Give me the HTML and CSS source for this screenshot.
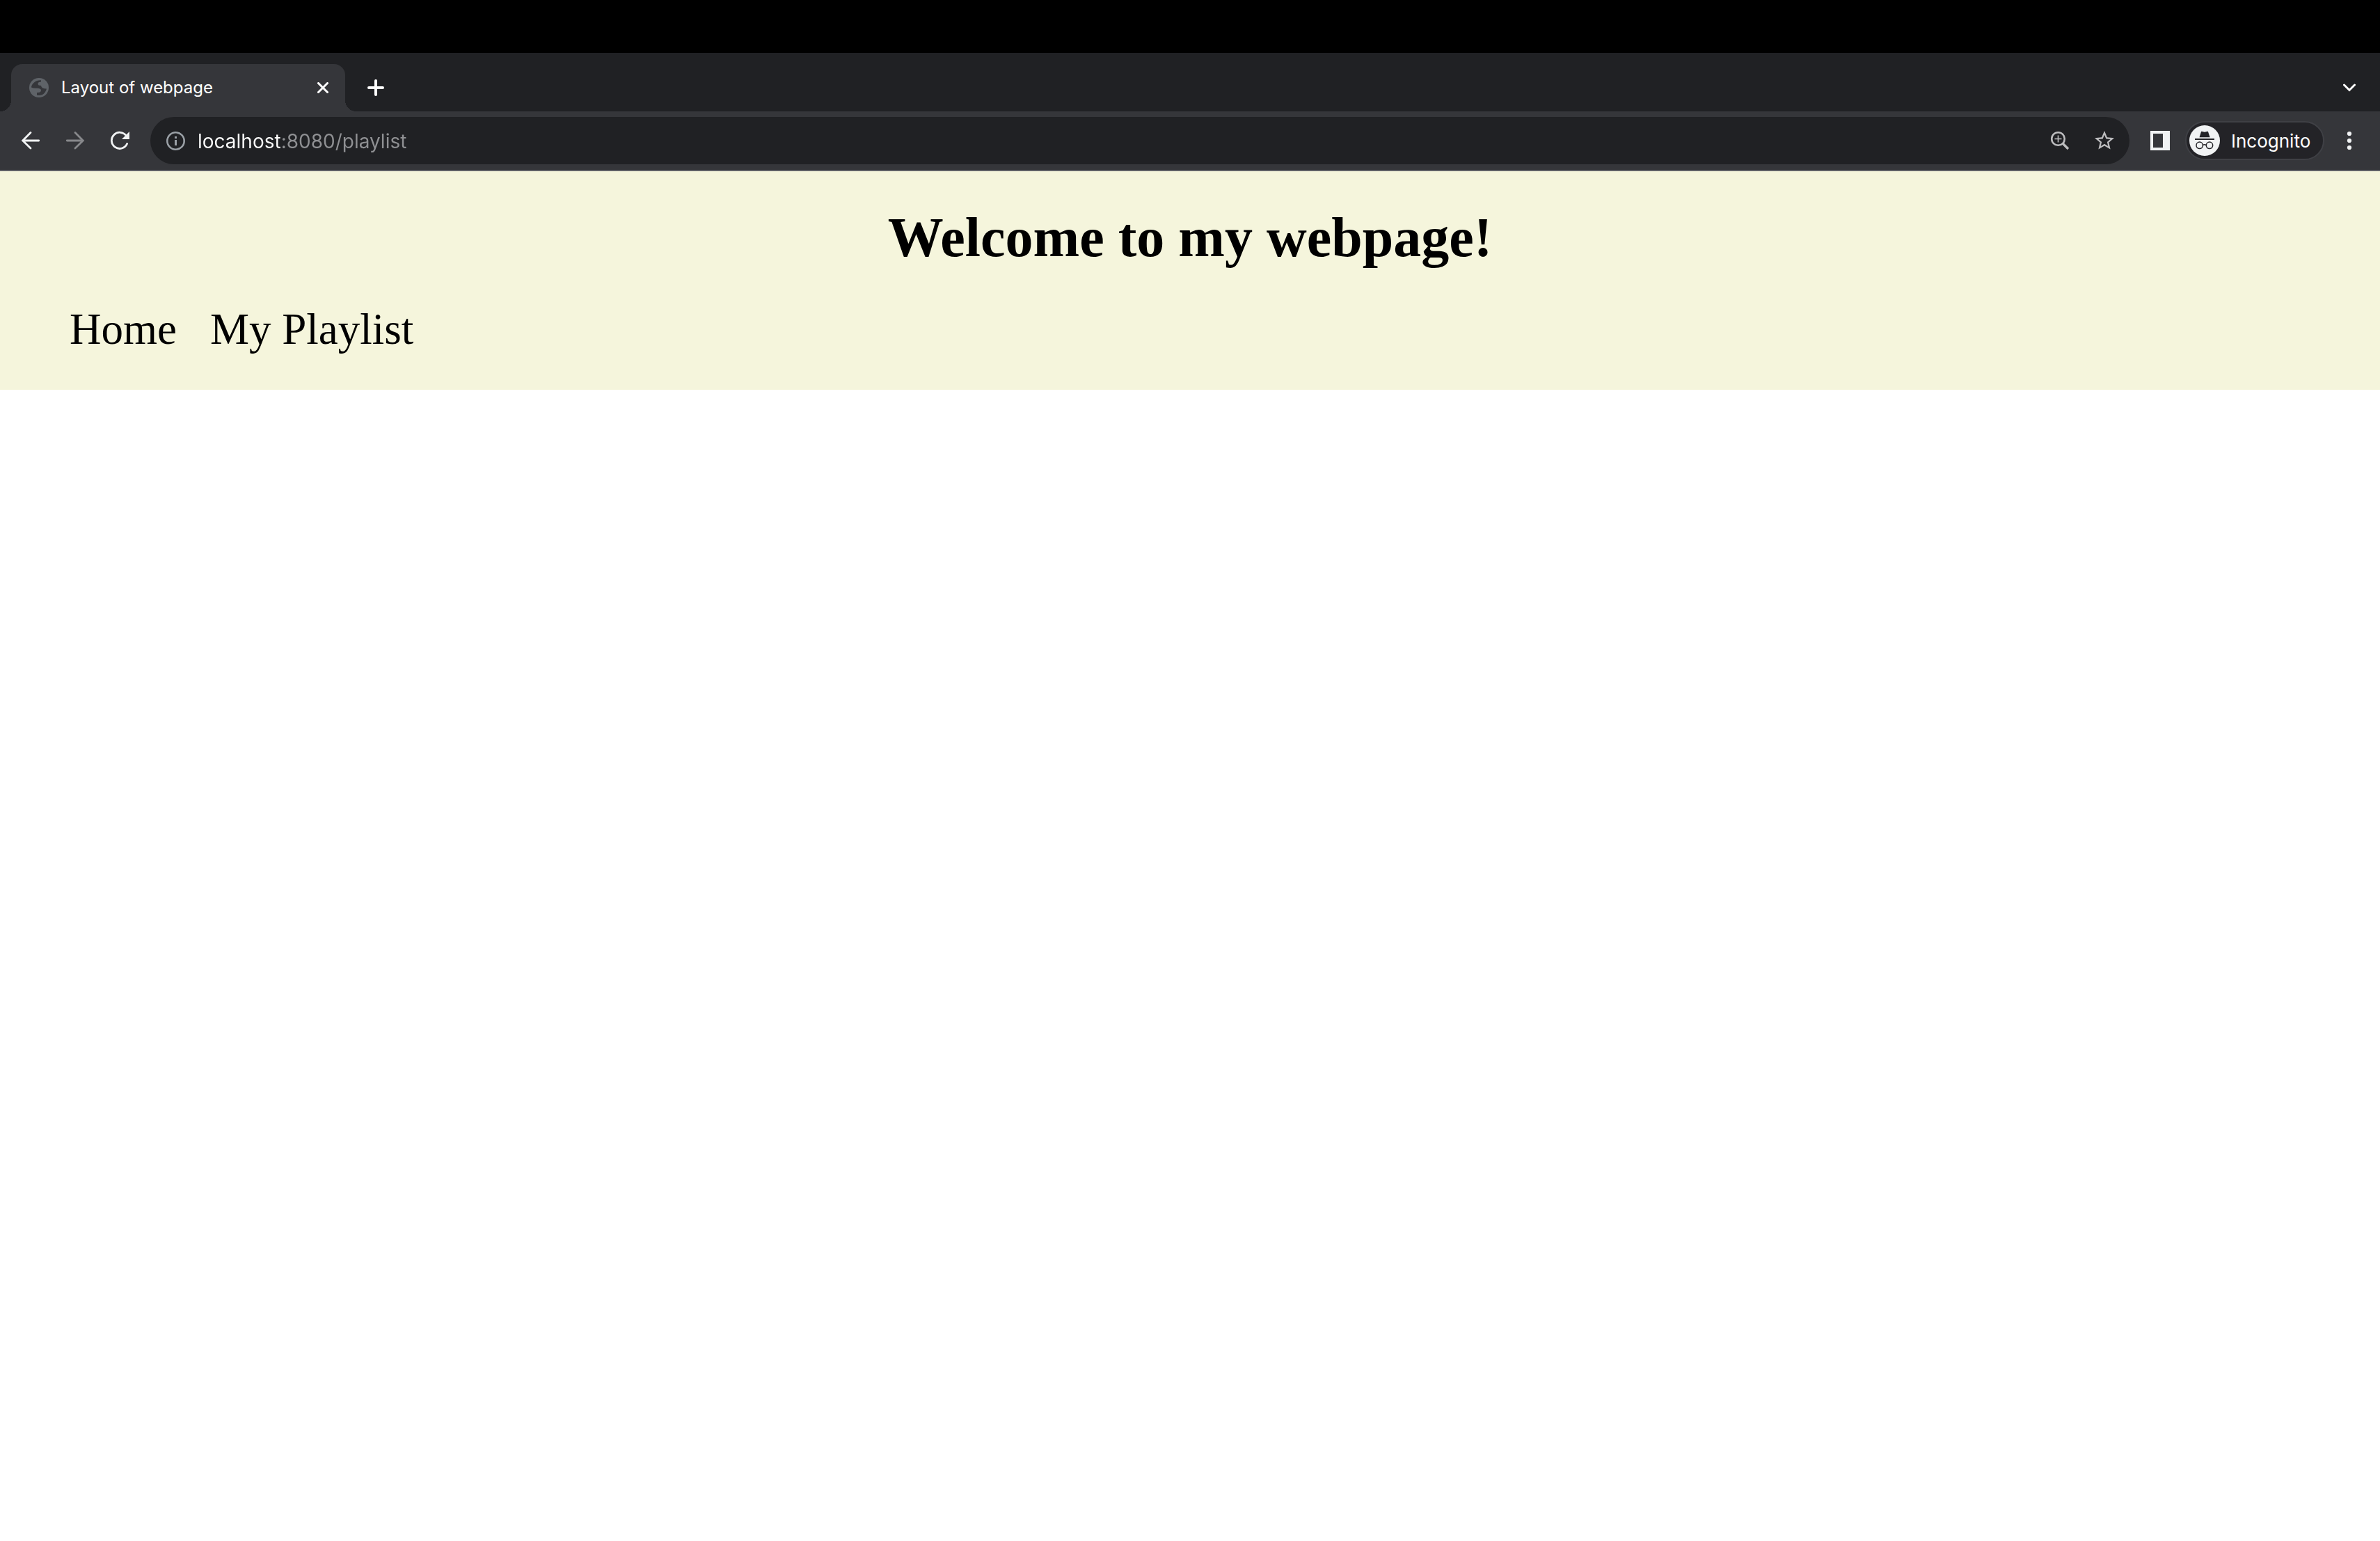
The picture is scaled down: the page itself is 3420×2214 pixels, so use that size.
FILE: index.html
```html
<!DOCTYPE html>
<html lang="en">
<head>
<meta charset="utf-8">
<meta name="viewport" content="width=device-width, initial-scale=1">
<title>Layout of webpage</title>
<link rel="stylesheet" href="styles.css">
</head>
<body>
<div class="browser">
  <div class="tab-strip">
    <div class="tab">
      <svg class="icon" viewBox="0 0 28 28" aria-hidden="true"><circle cx="14" cy="14" r="14" fill="#5f6368"/><path fill="#35363a" d="M3 13.500C3.500 8 9 3 17 3.200V5.500Q12.500 5.500 12.500 8.500 12.500 11 17 11 17.500 15.500 25 15.500 23.500 21.500 18.500 24.300 15 25.500 11 24.800V21Q17 21.500 17 17.500 16.500 14.500 10 14.800 5 15 3 13.500z"/></svg>
      <span class="tab-title">Layout of webpage</span>
      <button class="tab-close" aria-label="Close tab"><svg viewBox="0 0 16 16" width="16" height="16"><path d="M1.500 1.500 14.500 14.500M14.500 1.500 1.500 14.500" fill="none" stroke="#fff" stroke-width="3" stroke-linecap="round"/></svg></button>
    </div>
    <button class="tool new-tab" aria-label="New tab"><svg viewBox="0 0 24 24" width="24" height="24"><path d="M12 2v20M2 12h20" fill="none" stroke="#fff" stroke-width="4" stroke-linecap="round"/></svg></button>
    <button class="tool tab-search" aria-label="Search tabs"><svg viewBox="0 0 18 12" width="18" height="12"><path d="M1.500 2 9 9.500 16.500 2" fill="none" stroke="#fff" stroke-width="3" stroke-linecap="round"/></svg></button>
  </div>
  <div class="toolbar">
    <button class="tool" aria-label="Back"><svg class="icon" viewBox="0 0 28 28"><path d="M25.700 14H3M14 2.500 2.700 14 14 25" fill="none" stroke="#f1f3f4" stroke-width="2.800" stroke-linecap="round"/></svg></button>
    <button class="tool" aria-label="Forward"><svg class="icon" viewBox="0 0 28 28"><path d="M2.300 14H25M14 2.500 25.300 14 14 25" fill="none" stroke="#87888b" stroke-width="2.800" stroke-linecap="round"/></svg></button>
    <button class="tool" aria-label="Reload"><svg class="icon" viewBox="0 0 28 28"><path d="M24.600 18.500A11.600 11.600 0 1 1 23.500 7.200" fill="none" stroke="#f1f3f4" stroke-width="2.800" stroke-linecap="round"/><path d="M28 1v11H17z" fill="#f1f3f4"/></svg></button>
    <div class="omnibox">
      <svg class="icon" viewBox="0 0 28 28" aria-hidden="true"><circle cx="14.500" cy="14.500" r="12.200" fill="none" stroke="#9aa0a6" stroke-width="2.600"/><path d="M13 8h3v3h-3zM13 13h3v8h-3z" fill="#9aa0a6"/></svg>
      <input class="address" type="text" aria-label="Address" value="localhost:8080/playlist" spellcheck="false">
      <button class="tool" aria-label="Zoom"><svg class="icon" viewBox="0 0 28 28"><g fill="none" stroke="#bdbdbf"><circle cx="11.500" cy="11.500" r="9.300" stroke-width="2.600"/><path d="M11.500 6.500v10M6.500 11.500h10" stroke-width="1.600"/><path d="M18.500 18.500 26 26" stroke-width="3.400"/></g></svg></button>
      <button class="tool" aria-label="Bookmark this tab"><svg class="icon" viewBox="2 2 20 20"><path fill="#bdbdbf" d="m22 9.240-7.190-.62L12 2 9.190 8.630 2 9.240l5.460 4.730L5.820 21 12 17.270 18.180 21l-1.630-7.030L22 9.240zM12 15.400l-3.760 2.270 1-4.280-3.320-2.880 4.380-.38L12 6.100l1.710 4.040 4.380.38-3.320 2.880 1 4.280L12 15.400z"/></svg></button>
    </div>
    <button class="tool" aria-label="Side panel"><svg class="icon" viewBox="0 0 28 28"><path fill="#f1f3f4" fill-rule="evenodd" d="M0 0h28v28H0zM4 4v20h14V4z"/></svg></button>
    <button class="profile">
      <svg viewBox="0 0 44 44" width="44" height="44" aria-hidden="true"><circle cx="22" cy="22" r="22" fill="#f1f3f4"/><path fill="#232327" d="M14.500 17.300 17 9.200q.2-.6.900-.4l3 .8q1.100.3 2.200 0l3-.8q.7-.2.900.4l2.600 8.100zM8 19h28v2H8z"/><g fill="none" stroke="#232327" stroke-width="1.500"><circle cx="14.700" cy="28.800" r="4.700"/><circle cx="29" cy="28.800" r="4.700"/><path d="M19.300 28.500q2.500-1.600 5 0"/></g></svg>
      <span class="profile-name">Incognito</span>
    </button>
    <button class="tool" aria-label="Menu"><svg class="icon" viewBox="0 0 28 28"><g fill="#f1f3f4"><circle cx="14" cy="4" r="3.100"/><circle cx="14" cy="14" r="3.100"/><circle cx="14" cy="24" r="3.100"/></g></svg></button>
  </div>
</div>
<header class="site-header">
  <h1 class="site-title">Welcome to my webpage!</h1>
  <nav class="site-nav">
    <a href="#home">Home</a>
    <a href="#playlist">My Playlist</a>
  </nav>
</header>
</body>
</html>
```
FILE: styles.css
```css
* {
  box-sizing: border-box;
}

body {
  margin: 0;
  background: #fff;
  color: #000;
  font-family: "Liberation Serif", "Times New Roman", serif;
}

button {
  margin: 0;
  padding: 0;
  border: 0;
  background: none;
  color: inherit;
  font: inherit;
}

svg {
  display: block;
  flex: none;
}

.icon {
  width: 28px;
  height: 28px;
}

.browser {
  padding-top: 76px;
  background: #000;
  color: #fff;
  font-family: Inter, "Liberation Sans", sans-serif;
}

.tab-strip {
  display: flex;
  align-items: center;
  padding: 16px 12px 0 16px;
  background: #202124;
}

.tab {
  position: relative;
  display: flex;
  align-items: center;
  gap: 18px;
  width: 480px;
  height: 68px;
  padding: 0 16px 0 26px;
  border-radius: 16px 16px 0 0;
  background: #35363a;
}

/* Curved feet joining the tab to the toolbar */
.tab::before,
.tab::after {
  content: "";
  position: absolute;
  bottom: 0;
  width: 16px;
  height: 16px;
}

.tab::before {
  right: 100%;
  background: radial-gradient(circle at 0 0, #202124 16px, #35363a 16px);
}

.tab::after {
  left: 100%;
  background: radial-gradient(circle at 100% 0, #202124 16px, #35363a 16px);
}

.tab-title {
  flex: 1;
  font-size: 24px;
  line-height: 32px;
}

.tab-close {
  display: flex;
  align-items: center;
  justify-content: center;
  width: 32px;
  height: 32px;
}

.tool {
  display: flex;
  flex: none;
  align-items: center;
  justify-content: center;
  width: 64px;
  height: 56px;
}

.new-tab {
  margin-left: 12px;
}

.tab-search {
  margin-left: auto;
}

.toolbar {
  display: flex;
  align-items: center;
  padding: 8px 12px;
  border-bottom: 2px solid #5f6065;
  background: #35363a;
}

.omnibox {
  display: flex;
  flex: 1;
  align-items: center;
  height: 68px;
  margin: 0 12px;
  padding: 0 4px 0 22px;
  border-radius: 34px;
  background: #202124;
}

/* The host name is white, the port and path are grey */
.address {
  flex: 1;
  min-width: 0;
  height: 42px;
  margin-left: 18px;
  padding: 2px 0 0;
  border: 0;
  outline: 0;
  background: linear-gradient(to right, #fff 120px, #8f9093 120px);
  background-clip: text;
  -webkit-background-clip: text;
  color: transparent;
  font: 28px/40px Inter, "Liberation Sans", sans-serif;
}

.profile {
  display: flex;
  flex: none;
  align-items: center;
  gap: 16px;
  width: 200px;
  height: 56px;
  margin: 0 4px;
  padding: 0 4px;
  border: 2px solid #3f4045;
  border-radius: 28px;
  background: #232327;
}

.profile-name {
  padding-top: 2px;
  font-size: 26px;
  line-height: 32px;
}

.site-header {
  padding: 49px 100px;
  background: beige;
}

.site-title {
  margin: 0 0 48px;
  font-size: 80px;
  line-height: 92px;
  text-align: center;
}

.site-nav {
  display: flex;
  gap: 48px;
  font-size: 63px;
  line-height: 76px;
}

.site-nav a {
  color: inherit;
  text-decoration: none;
}
```
